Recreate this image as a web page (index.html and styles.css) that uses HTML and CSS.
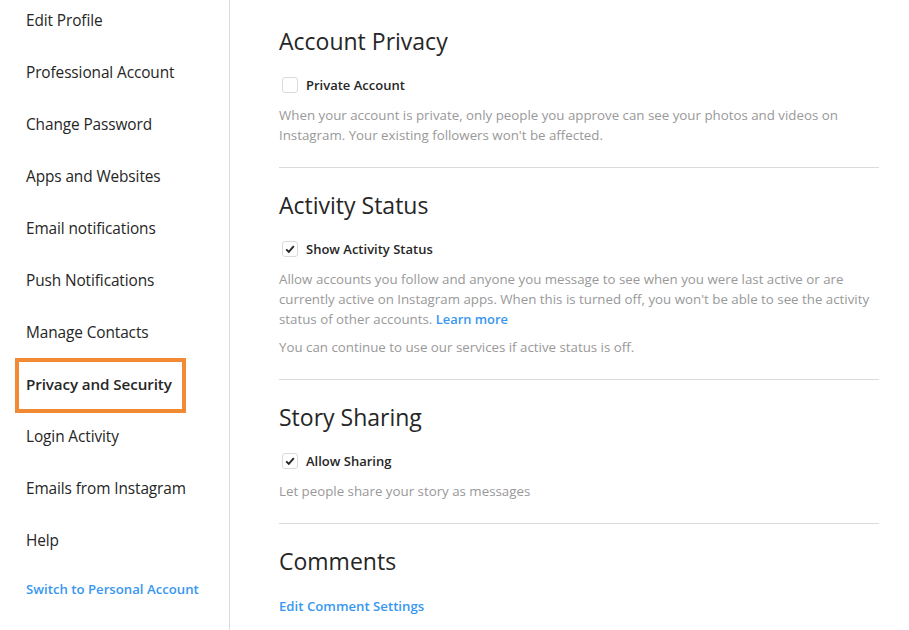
FILE: index.html
```html
<!DOCTYPE html>
<html>
<head>
<meta charset="utf-8">
<link rel="stylesheet" href="styles.css">
</head>
<body>
<div class="page">
  <nav class="sidebar">
    <ul class="menu">
      <li class="menu-item">Edit Profile</li>
      <li class="menu-item">Professional Account</li>
      <li class="menu-item">Change Password</li>
      <li class="menu-item">Apps and Websites</li>
      <li class="menu-item">Email notifications</li>
      <li class="menu-item">Push Notifications</li>
      <li class="menu-item">Manage Contacts</li>
      <li class="menu-item active">Privacy and Security</li>
      <li class="menu-item">Login Activity</li>
      <li class="menu-item">Emails from Instagram</li>
      <li class="menu-item">Help</li>
    </ul>
    <a class="switch-link">Switch to Personal Account</a>
  </nav>
  <main class="content">
    <section class="section first">
      <h2 class="title">Account Privacy</h2>
      <label class="check-row">
        <span class="box"></span>
        <span class="check-label">Private Account</span>
      </label>
      <p class="desc">When your account is private, only people you approve can see your photos and videos on Instagram. Your existing followers won't be affected.</p>
    </section>
    <section class="section">
      <h2 class="title">Activity Status</h2>
      <label class="check-row">
        <span class="box checked"><svg viewBox="0 0 16 16" width="16" height="16"><path d="M4.2 8.3 L6.8 10.9 L11.8 5.2" fill="none" stroke="#262626" stroke-width="1.9"/></svg></span>
        <span class="check-label">Show Activity Status</span>
      </label>
      <p class="desc">Allow accounts you follow and anyone you message to see when you were last active or are currently active on Instagram apps. When this is turned off, you won't be able to see the activity status of other accounts. <a class="link">Learn more</a></p>
      <p class="desc extra">You can continue to use our services if active status is off.</p>
    </section>
    <section class="section">
      <h2 class="title">Story Sharing</h2>
      <label class="check-row">
        <span class="box checked"><svg viewBox="0 0 16 16" width="16" height="16"><path d="M4.2 8.3 L6.8 10.9 L11.8 5.2" fill="none" stroke="#262626" stroke-width="1.9"/></svg></span>
        <span class="check-label">Allow Sharing</span>
      </label>
      <p class="desc">Let people share your story as messages</p>
    </section>
    <section class="section last">
      <h2 class="title">Comments</h2>
      <a class="link block">Edit Comment Settings</a>
    </section>
  </main>
</div>
</body>
</html>
```

FILE: styles.css
```css
html, body {
  margin: 0;
  padding: 0;
  background: #fff;
}
body {
  font-family: "Open Sans", "Noto Sans", sans-serif;
  color: #262626;
}
.page {
  display: flex;
  width: 909px;
  height: 630px;
  overflow: hidden;
}
.sidebar {
  width: 230px;
  flex: none;
  border-right: 1px solid #dbdbdb;
  box-sizing: border-box;
}
.menu {
  list-style: none;
  margin: 0;
  padding: 0;
}
.menu-item {
  font-size: 15.4px;
  line-height: 20px;
  padding: 16px 0 16px 26px;
  letter-spacing: -0.1px;
  color: #262626;
}
.menu-item:first-child {
  padding-top: 11px;
}
.menu-item.active {
  position: relative;
  font-weight: 600;
  font-size: 15.2px;
  padding-top: 15px;
  padding-bottom: 17px;
}
.menu-item.active::after {
  content: "";
  position: absolute;
  left: 15px;
  top: -1px;
  width: 171px;
  height: 55px;
  border: 4px solid #f28a33;
  box-sizing: border-box;
}
.switch-link {
  display: block;
  margin-top: 13px;
  padding-left: 26px;
  font-size: 13.2px;
  line-height: 18px;
  font-weight: 600;
  color: #3897f0;
}
.content {
  flex: 1;
  padding: 0 30px 0 49px;
}
.section {
  padding: 22px 0 22px;
  border-bottom: 1px solid #dbdbdb;
}
.section.first {
  padding-top: 26px;
}
.section.last {
  border-bottom: none;
}
.title {
  margin: 0;
  font-size: 23px;
  line-height: 30px;
  font-weight: 400;
  color: #262626;
}
.check-row {
  display: flex;
  align-items: center;
  margin-top: 20px;
  height: 18px;
  padding-left: 3px;
}
.box {
  width: 16px;
  height: 16px;
  border: 1px solid #dbdbdb;
  border-radius: 3px;
  box-sizing: border-box;
  display: flex;
  align-items: center;
  justify-content: center;
  margin-right: 8px;
}
.box svg {
  flex: none;
}
.check-label {
  font-size: 13px;
  font-weight: 600;
  line-height: 18px;
}
.desc {
  margin: 11px 0 0;
  font-size: 13.3px;
  line-height: 20px;
  color: #999;
}
.desc.extra {
  margin-top: 8px;
}
.link {
  color: #3897f0;
  font-weight: 600;
}
.desc .link {
  font-size: 12.9px;
}
.link.block {
  display: block;
  margin-top: 21px;
  font-size: 13.2px;
  line-height: 18px;
}
```
